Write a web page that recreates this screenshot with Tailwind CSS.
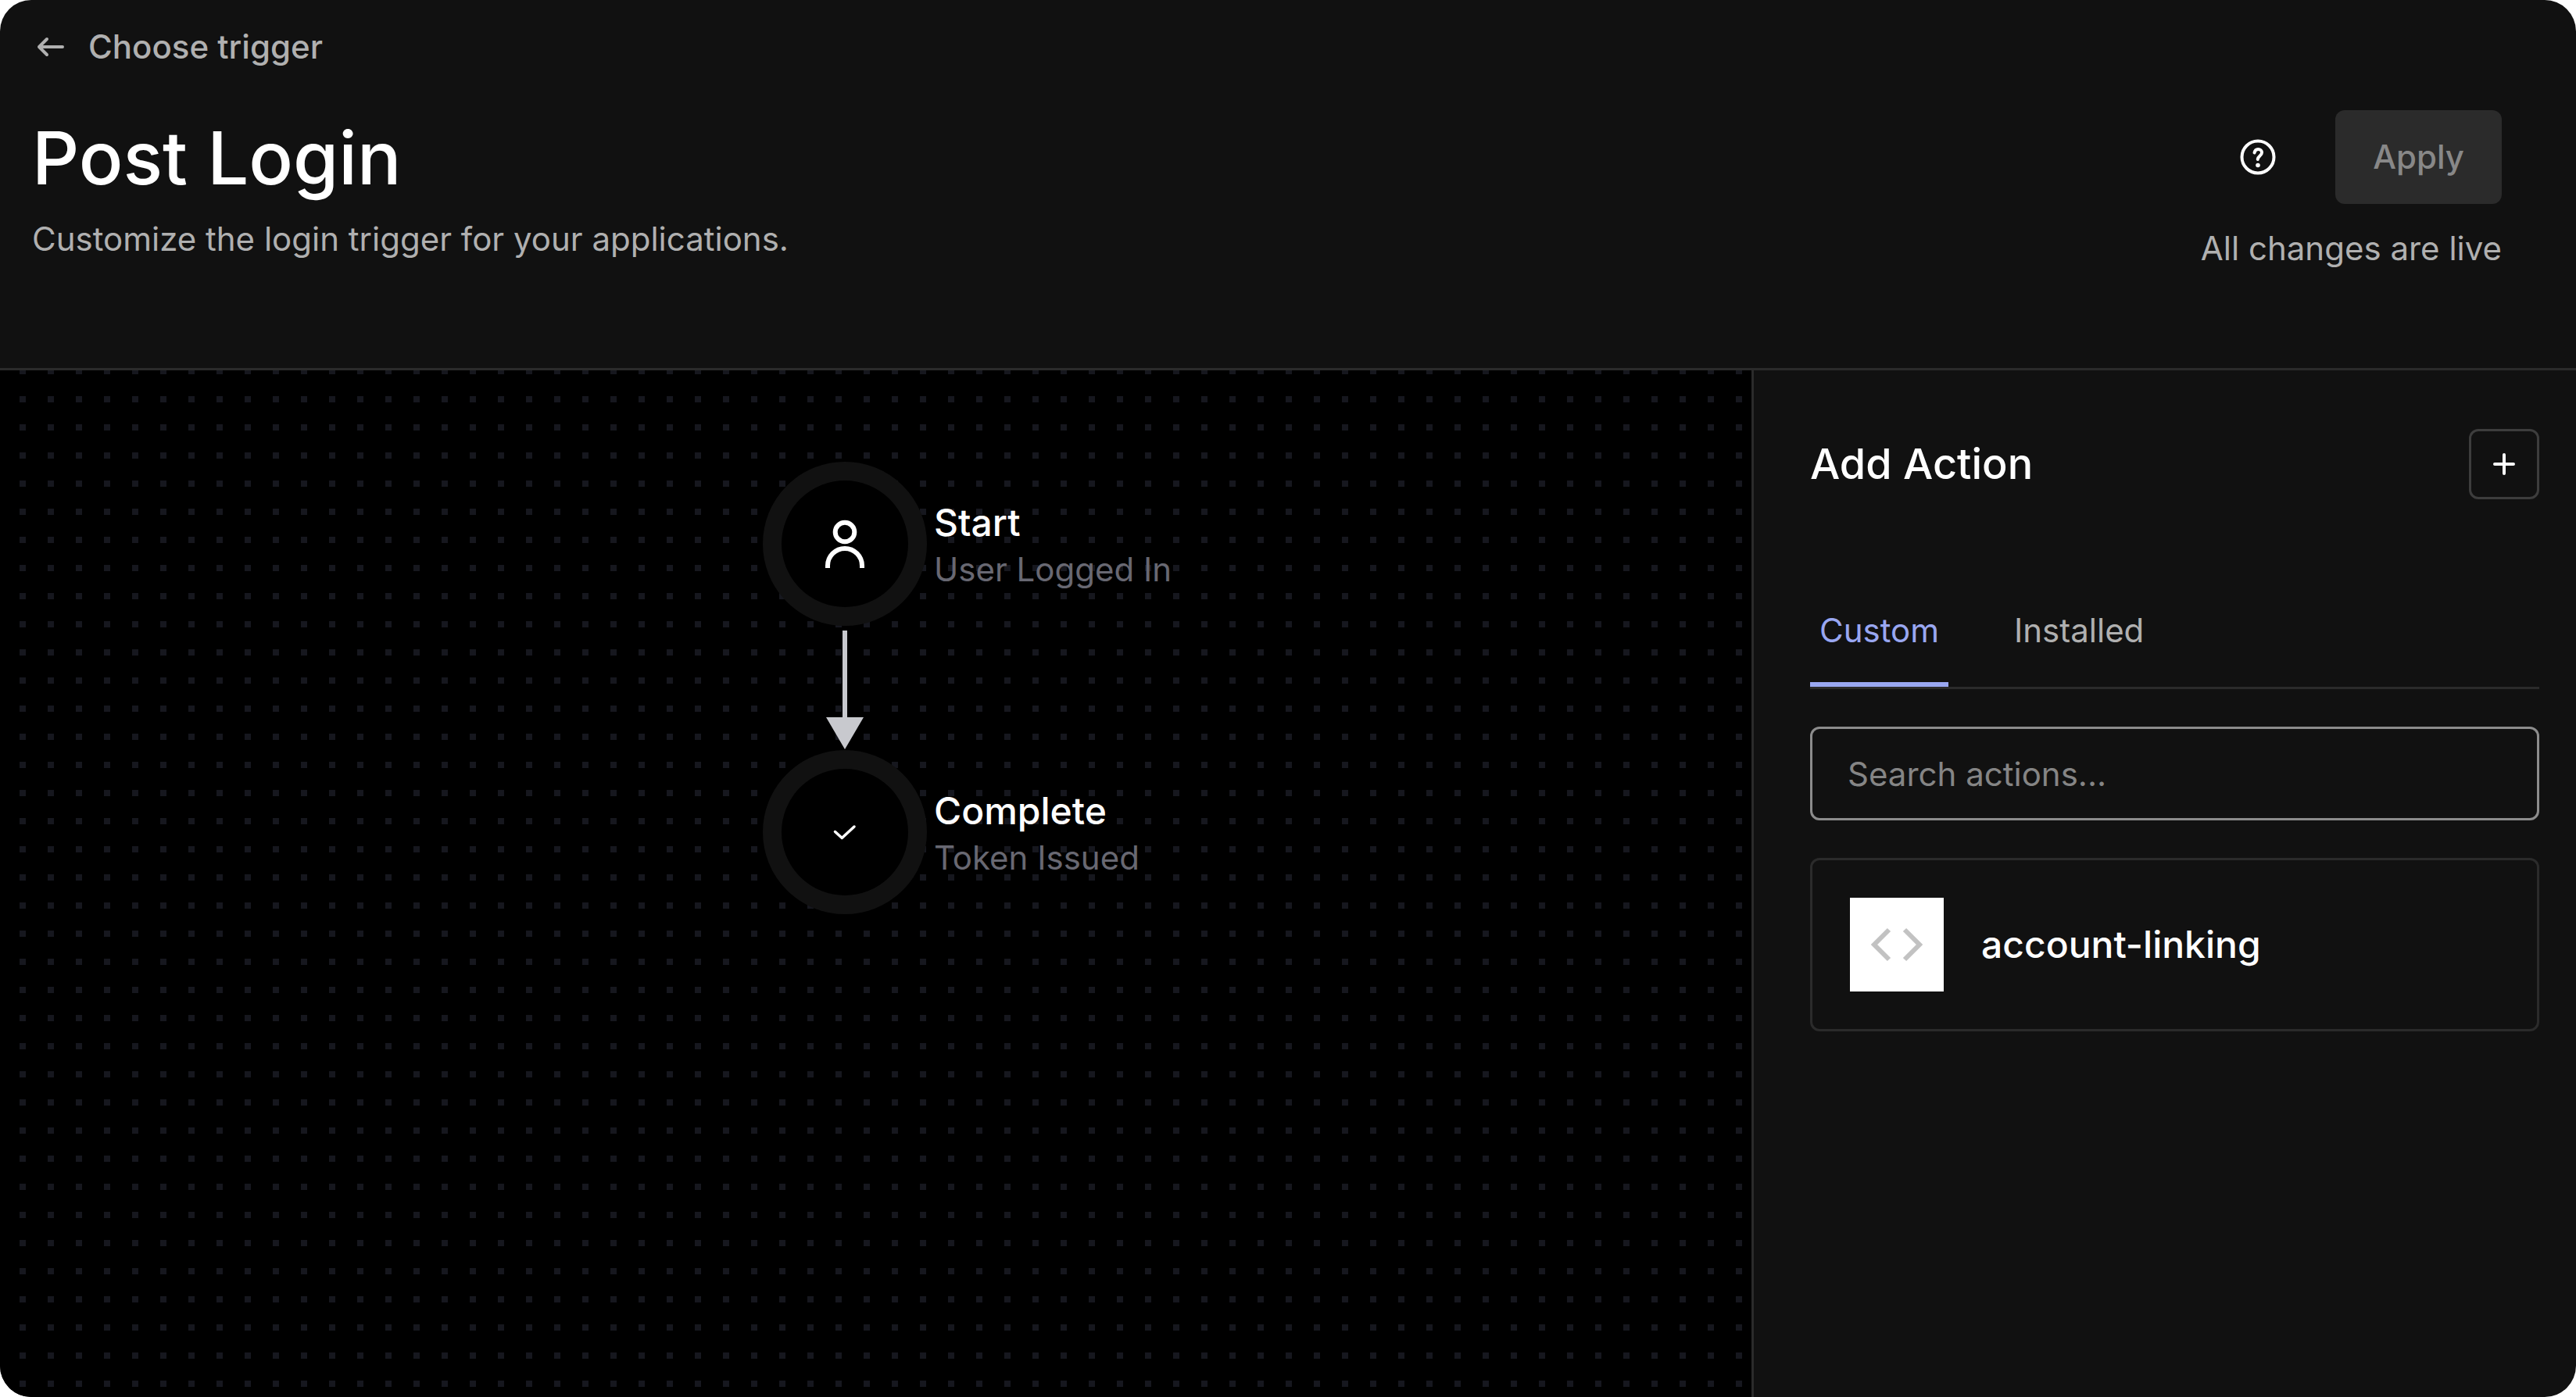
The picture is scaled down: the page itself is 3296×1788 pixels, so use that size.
<!DOCTYPE html>
<html lang="en">
<head>
<meta charset="utf-8">
<title>Post Login</title>
<script src="https://cdn.jsdelivr.net/npm/@tailwindcss/browser@4"></script>
</head>
<body class="bg-white">
<div class="flex min-h-screen flex-col overflow-hidden rounded-[40px] bg-[#111] font-[Inter,sans-serif] text-[42px]/[60px] text-[#b0b0b0]">
  <header class="border-b-3 border-[#2b2b2b] pt-[30px] pr-[95px] pb-[123px] pl-[41px]">
    <a href="#" class="flex w-fit items-center gap-[30px] font-medium">
      <svg class="h-[42px] w-[42px]" viewBox="0 0 42 42" fill="none" stroke="currentColor" stroke-width="4" stroke-linecap="round" stroke-linejoin="round" aria-hidden="true"><path d="M39 21H9M19 11L9 21L19 31"/></svg>
      Choose trigger
    </a>
    <div class="mt-[51px] flex items-start justify-between">
      <div>
        <h1 class="text-[94px]/[122px] font-medium text-white">Post Login</h1>
        <p class="mt-[13px]">Customize the login trigger for your applications.</p>
      </div>
      <div class="flex flex-col items-end gap-[27px]">
        <div class="flex items-center gap-[75px]">
          <button aria-label="Help" class="h-[48px] w-[48px] text-white">
            <svg class="h-full w-full" viewBox="0 0 48 48" fill="none" stroke="currentColor" stroke-width="4" stroke-linecap="round" aria-hidden="true"><circle cx="24" cy="24" r="20.5"/><path d="M19.5 18.5c.6-3 2.500-4.500 4.800-4.500 2.700 0 4.700 1.800 4.700 4.300 0 4-5 4.400-5.300 8.700"/><circle cx="24" cy="34.500" r="2.800" fill="currentColor" stroke="none"/></svg>
          </button>
          <button disabled class="h-[120px] rounded-[12px] bg-[#2b2b2b] px-[48px] font-medium text-[#888]">Apply</button>
        </div>
        <p>All changes are live</p>
      </div>
    </div>
  </header>
  <div class="flex grow">
    <main class="relative grow bg-black">
      <svg class="absolute inset-0 h-full w-full" aria-hidden="true">
        <defs><pattern id="dots" width="36" height="36" patternUnits="userSpaceOnUse" y="-3"><rect x="25" width="8" height="8" fill="#16171e"/></pattern></defs>
        <rect width="100%" height="100%" fill="url(#dots)"/>
      </svg>
      <div class="relative ml-[976px] flex flex-col items-start pt-[117px]">
        <section class="flex items-center gap-[9px]">
          <div class="flex h-[210px] w-[210px] items-center justify-center rounded-full border-24 border-[#111] bg-black text-white">
            <svg class="h-[72px] w-[72px]" viewBox="0 0 72 72" fill="none" stroke="currentColor" stroke-width="6" aria-hidden="true"><circle cx="36" cy="21" r="12.3"/><path d="M14 67V64a22 22 0 0 1 44 0v3"/></svg>
          </div>
          <div class="pt-[6px]">
            <h2 class="text-[48px]/[60px] font-medium text-white">Start</h2>
            <p class="text-[#686872]">User Logged In</p>
          </div>
        </section>
        <svg class="mt-[6px] mb-px ml-[80px] h-[152px] w-[50px]" viewBox="0 0 50 152" fill="#c8c9ce" aria-hidden="true"><path d="M22 0h6v111h21L25 152L1 111h21z"/></svg>
        <section class="flex items-center gap-[9px]">
          <div class="flex h-[210px] w-[210px] items-center justify-center rounded-full border-24 border-[#111] bg-black text-white">
            <svg class="h-[36px] w-[36px]" viewBox="0 0 36 36" fill="none" stroke="currentColor" stroke-width="3.500" stroke-linecap="round" stroke-linejoin="round" aria-hidden="true"><path d="M5.500 17.500L14.300 25.500L30 11"/></svg>
          </div>
          <div class="pt-[6px]">
            <h2 class="text-[48px]/[60px] font-medium text-white">Complete</h2>
            <p class="text-[#686872]">Token Issued</p>
          </div>
        </section>
      </div>
    </main>
    <aside class="w-[1055px] shrink-0 border-l-3 border-[#2b2b2b] pt-[75px] pr-[47px] pl-[72px]">
      <div class="flex items-center justify-between">
        <h2 class="text-[54px]/[72px] font-medium text-white">Add Action</h2>
        <button aria-label="Add action" class="flex h-[90px] w-[90px] items-center justify-center rounded-[12px] border-3 border-[#3d3d3d] text-white">
          <svg class="h-[36px] w-[36px]" viewBox="0 0 36 36" stroke="currentColor" stroke-width="4" stroke-linecap="round" aria-hidden="true"><path d="M18 6v24M6 18h24"/></svg>
        </button>
      </div>
      <div role="tablist" class="mt-[114px] flex gap-[72px] border-b-3 border-[#2b2b2b]">
        <button role="tab" aria-selected="true" class="border-b-6 border-[#99a7f1] px-[12px] pt-[24px] pb-[36px] text-[#99a7f1]">Custom</button>
        <button role="tab" aria-selected="false" class="border-b-6 border-transparent px-[12px] pt-[24px] pb-[36px]">Installed</button>
      </div>
      <input type="search" aria-label="Search actions" placeholder="Search actions..." class="mt-[48px] block h-[120px] w-full rounded-[12px] border-3 border-[#8c8c8c] px-[45px] placeholder:text-[#858585]">
      <button class="mt-[48px] flex w-full items-center gap-[48px] rounded-[12px] border-3 border-[#2b2b2b] p-[48px] text-left text-[48px]/[60px] font-medium text-white">
        <span class="flex h-[120px] w-[120px] items-center justify-center bg-white text-[#c2c2c2]">
          <svg class="h-[72px] w-[72px]" viewBox="0 0 72 72" fill="none" stroke="currentColor" stroke-width="6" aria-hidden="true"><path d="M26 17L7 36L26 55M46 17L65 36L46 55"/></svg>
        </span>
        account-linking
      </button>
    </aside>
  </div>
</div>
</body>
</html>
